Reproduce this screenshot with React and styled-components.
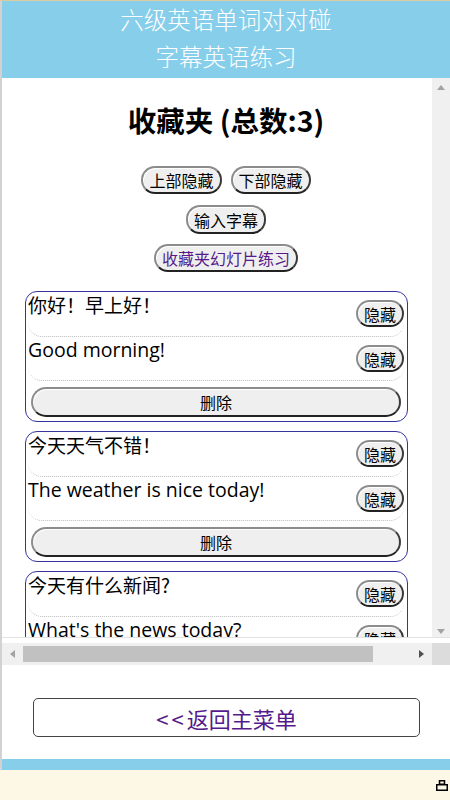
import React from 'react'
import styled, { createGlobalStyle } from 'styled-components'

const GlobalStyle = createGlobalStyle`
  html, body {
    margin: 0;
    padding: 0;
    overflow: hidden;
    background: #fff;
  }
  body {
    font-family: "Noto Sans CJK SC", "Noto Sans", sans-serif;
  }
`

const Page = styled.div`
  display: flex;
  flex-direction: column;
  width: 450px;
  height: 800px;
  box-sizing: border-box;
  border-top: 1px solid #dccb9c;
`

const Frame = styled.div`
  display: flex;
  flex-direction: column;
  flex: 0 0 769px;
  border-left: 2px solid #d2d2d2;
`

const Header = styled.header`
  flex: 0 0 77px;
  background: #87ceeb;
  color: #fff;
  text-align: center;
  font-size: 23.5px;
  line-height: 37px;
  box-sizing: border-box;
  font-weight: 300;
`

const ScrollBox = styled.div`
  display: grid;
  grid-template-columns: 430px 18px;
  grid-template-rows: 559px 28px;
`

const Viewport = styled.div`
  overflow: hidden;
  position: relative;
`

const Content = styled.div`
  width: 448px;
  padding-top: 22px;
`

const Title = styled.h1`
  margin: 0;
  text-align: center;
  font-size: 28.5px;
  line-height: 40px;
  font-weight: 700;
  color: #000;
  font-family: "Noto Sans CJK SC", "Noto Sans", sans-serif;
`

const ButtonRow = styled.div`
  display: flex;
  justify-content: center;
  gap: 9px;
  margin-top: ${p => p.$top || 11}px;
`

const PillButton = styled.button`
  font-family: "Noto Sans CJK SC", sans-serif;
  font-size: 16px;
  line-height: 20px;
  height: ${p => p.$h || 28}px;
  padding: 0 6px;
  color: ${p => (p.$visited ? '#551a8b' : '#000')};
  background: #efefef;
  border: 2px solid;
  border-color: #8c8c8c #3a3a3a #222 #8c8c8c;
  border-radius: 14px;
  box-shadow: inset 1px 1px 0 #fff;
  cursor: pointer;
  box-sizing: border-box;
`

const CardList = styled.div`
  display: flex;
  flex-direction: column;
  gap: 9px;
  margin: 19px 0 0 23px;
  width: 383px;
`

const Card = styled.div`
  border: 1px solid #34349c;
  border-radius: 12px;
  padding: 0 3px 4px 2px;
`

const Row = styled.div`
  display: flex;
  justify-content: space-between;
  align-items: flex-start;
  height: ${p => p.$h || 45}px;
  box-sizing: border-box;
  border-bottom: 1px dotted #bdbdbd;
  border-radius: 0 0 14px 14px;
`

const Phrase = styled.div`
  font-size: ${p => (p.$en ? 19.5 : 19)}px;
  line-height: 26px;
  color: #000;
  white-space: nowrap;
  font-family: ${p => (p.$en ? '"Open Sans", "Noto Sans", sans-serif' : '"Noto Sans CJK SC", sans-serif')};
`

const HideButton = styled(PillButton)`
  margin-top: 8px;
  padding: 0 6px;
  height: 27px;
`

const DeleteButton = styled(PillButton)`
  display: block;
  width: calc(100% - 6px);
  margin: 6px 0 0 3px;
  height: 30px;
  border-radius: 15px;
`

const VTrack = styled.div`
  background: #f0f0f0;
  display: flex;
  flex-direction: column;
  justify-content: space-between;
  align-items: center;
  padding: 7px 0 3px;
`

const HTrack = styled.div`
  border-top: 1px solid #e2e2e2;
  padding-top: 5px;
`

const HInner = styled.div`
  height: 22px;
  background: #f0f0f0;
  display: flex;
  align-items: center;
  padding: 0 8px;
  gap: 8px;
`

const Thumb = styled.div`
  flex: none;
  height: 16px;
  width: 350px;
  background: #c1c1c1;
`

const Corner = styled.div`
  border-top: 1px solid #e2e2e2;
  padding-top: 5px;
  &::after {
    content: '';
    display: block;
    height: 22px;
    background: #dcdcdc;
  }
`

const Arrow = styled.span`
  flex: none;
  width: 0;
  height: 0;
  border: 4px solid transparent;
  ${p => p.$dir === 'up' && 'border-bottom: 5px solid #a3a3a3; border-top-width: 0;'}
  ${p => p.$dir === 'down' && 'border-top: 5px solid #a3a3a3; border-bottom-width: 0;'}
  ${p => p.$dir === 'left' && 'border-right: 5px solid #a3a3a3; border-left-width: 0;'}
  ${p => p.$dir === 'right' && 'border-left: 5px solid #505050; border-right-width: 0; margin-left: auto;'}
`

const Footer = styled.div`
  flex: 1;
  padding: 33px 30px 0 31px;
`

const BackButton = styled.button`
  display: block;
  width: 100%;
  height: 39px;
  background: #fff;
  border: 1px solid #444;
  border-radius: 5px;
  color: #551a8b;
  font-size: 22px;
  font-family: "Noto Sans CJK SC", sans-serif;
  cursor: pointer;
`

const Arrows = styled.span`
  letter-spacing: 3px;
`

const BlueBar = styled.div`
  flex: 0 0 11px;
  background: #87ceeb;
`

const StatusBar = styled.div`
  flex: 1;
  background: #fdf7e5;
  display: flex;
  justify-content: flex-end;
  align-items: center;
  padding-right: 2px;
`

const phrases = [
  { cn: '你好！早上好！', en: 'Good morning!' },
  { cn: '今天天气不错！', en: 'The weather is nice today!' },
  { cn: '今天有什么新闻?', en: "What's the news today?" },
]

export default function App() {
  return (
    <Page>
      <GlobalStyle />
      <Frame>
        <Header>
          <div>六级英语单词对对碰</div>
          <div>字幕英语练习</div>
        </Header>
        <ScrollBox>
          <Viewport>
            <Content>
              <Title>收藏夹 (总数:3)</Title>
              <ButtonRow $top={26}>
                <PillButton>上部隐藏</PillButton>
                <PillButton>下部隐藏</PillButton>
              </ButtonRow>
              <ButtonRow>
                <PillButton $h={29}>输入字幕</PillButton>
              </ButtonRow>
              <ButtonRow $top={10}>
                <PillButton $visited>收藏夹幻灯片练习</PillButton>
              </ButtonRow>
              <CardList>
                {phrases.map(p => (
                  <Card key={p.en}>
                    <Row>
                      <Phrase>{p.cn}</Phrase>
                      <HideButton>隐藏</HideButton>
                    </Row>
                    <Row $h={44}>
                      <Phrase $en>{p.en}</Phrase>
                      <HideButton>隐藏</HideButton>
                    </Row>
                    <DeleteButton>删除</DeleteButton>
                  </Card>
                ))}
              </CardList>
            </Content>
          </Viewport>
          <VTrack>
            <Arrow $dir="up" />
            <Arrow $dir="down" />
          </VTrack>
          <HTrack>
            <HInner>
              <Arrow $dir="left" />
              <Thumb />
              <Arrow $dir="right" />
            </HInner>
          </HTrack>
          <Corner />
        </ScrollBox>
        <Footer>
          <BackButton><Arrows>&lt;&lt;</Arrows>返回主菜单</BackButton>
        </Footer>
        <BlueBar />
      </Frame>
      <StatusBar>
        <svg width="12" height="11" viewBox="0 0 12 11">
          <rect x="3.5" y="0.75" width="5" height="3.5" fill="none" stroke="#000" strokeWidth="1.5" />
          <rect x="0.75" y="4.75" width="10.5" height="5.5" fill="none" stroke="#000" strokeWidth="1.5" />
        </svg>
      </StatusBar>
    </Page>
  )
}
